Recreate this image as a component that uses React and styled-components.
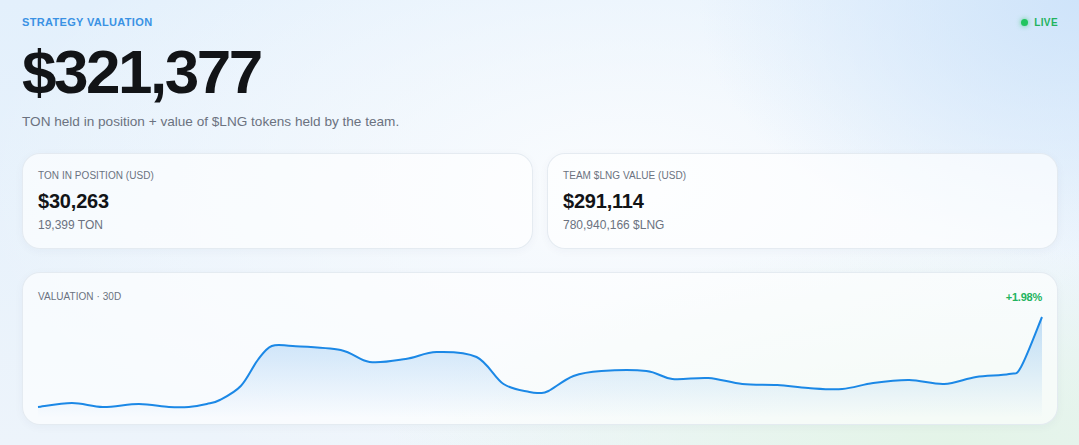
import React from "react";
import styled, { createGlobalStyle } from "styled-components";

const GlobalStyle = createGlobalStyle`
  html, body {
    margin: 0;
    padding: 0;
  }
  body {
    font-family: "Liberation Sans", Arial, sans-serif;
    color: #111418;
    background: #eef5fb;
  }
`;

// 30 day valuation, already scaled into the chart box (x: 0..1005, y: 0..100)
const series = [
  [0, 95], [34, 91], [65, 95], [101, 92], [131, 95], [151, 95], [169, 92],
  [182, 88], [203, 74], [220, 48], [234, 34], [255, 34], [303, 38], [332, 50],
  [368, 47], [399, 40], [439, 45], [466, 72], [492, 80], [502, 81], [511, 79],
  [536, 64], [564, 59], [609, 59], [635, 67], [671, 66], [705, 72], [740, 73],
  [771, 76], [805, 77], [836, 71], [872, 68], [907, 72], [939, 65], [972, 62],
  [984, 55], [1005, 5],
];

const CHART_W = 1005;
const CHART_H = 100;

const smoothPath = (pts) => {
  let d = `M${pts[0][0]},${pts[0][1]}`;
  for (let i = 0; i < pts.length - 1; i++) {
    const p0 = pts[i - 1] || pts[i];
    const p1 = pts[i];
    const p2 = pts[i + 1];
    const p3 = pts[i + 2] || p2;
    const c1x = p1[0] + (p2[0] - p0[0]) / 6;
    const c1y = p1[1] + (p2[1] - p0[1]) / 6;
    const c2x = p2[0] - (p3[0] - p1[0]) / 6;
    const c2y = p2[1] - (p3[1] - p1[1]) / 6;
    d += ` C${c1x},${c1y} ${c2x},${c2y} ${p2[0]},${p2[1]}`;
  }
  return d;
};

const Page = styled.div`
  box-sizing: border-box;
  height: 445px;
  padding: 15px 21px 0 22px;
  overflow: hidden;
  background:
    radial-gradient(ellipse 380px 260px at 100% 0%, #cfe4fa 0%, rgba(207, 228, 250, 0) 100%),
    radial-gradient(ellipse 560px 200px at 88% 100%, #e3f4e7 0%, rgba(227, 244, 231, 0) 100%),
    radial-gradient(ellipse 650px 330px at 58% 42%, #fafcfe 0%, rgba(250, 252, 254, 0) 100%),
    linear-gradient(180deg, #e3f0fc 0%, #edf4fb 100%);
`;

const Header = styled.div`
  display: flex;
  justify-content: space-between;
  align-items: center;
  height: 14px;
`;

const Eyebrow = styled.div`
  font-size: 11px;
  font-weight: 700;
  letter-spacing: 0.03em;
  color: #3a92e4;
  text-transform: uppercase;
`;

const Live = styled.div`
  display: flex;
  align-items: center;
  gap: 6px;
  font-size: 10px;
  font-weight: 700;
  letter-spacing: 0.04em;
  color: #22b35e;
`;

const Dot = styled.span`
  width: 7px;
  height: 7px;
  border-radius: 50%;
  background: #22c55e;
  box-shadow: 0 0 5px rgba(34, 197, 94, 0.7);
`;

const Total = styled.div`
  margin-top: 11px;
  font-size: 62px;
  line-height: 64px;
  font-weight: 700;
  letter-spacing: -0.04em;
  color: #121417;
`;

const Caption = styled.div`
  margin-top: 8px;
  font-size: 13.6px;
  line-height: 20px;
  color: #6b7280;
`;

const Cards = styled.div`
  display: grid;
  grid-template-columns: 1fr 1fr;
  gap: 14px;
  margin-top: 21px;
`;

const Card = styled.div`
  box-sizing: border-box;
  border-radius: 18px;
  background: rgba(255, 255, 255, 0.62);
  border: 1px solid rgba(222, 230, 238, 0.8);
  box-shadow: 0 2px 10px rgba(30, 60, 100, 0.04);
  padding: ${(p) => p.$pad || "15px 15px"};
`;

const Label = styled.div`
  font-size: 10px;
  line-height: 14px;
  letter-spacing: 0.005em;
  color: #6b7280;
  text-transform: uppercase;
`;

const Value = styled.div`
  margin-top: 6px;
  font-size: 20px;
  line-height: 24px;
  font-weight: 700;
  letter-spacing: -0.01em;
  color: #121417;
`;

const Sub = styled.div`
  margin-top: 4px;
  font-size: 12px;
  line-height: 16px;
  color: #6b7280;
`;

const ChartCard = styled(Card)`
  margin-top: 23px;
  height: 153px;
`;

const ChartHead = styled.div`
  display: flex;
  justify-content: space-between;
  align-items: center;
  margin-top: 2px;
`;

const Change = styled.div`
  font-size: 11px;
  font-weight: 700;
  color: #22b35e;
  letter-spacing: -0.02em;
`;

const ChartSvg = styled.svg`
  display: block;
  width: 100%;
  height: ${CHART_H}px;
  margin-top: 8px;
  overflow: visible;
`;

const StatCard = ({ label, value, sub }) => (
  <Card>
    <Label>{label}</Label>
    <Value>{value}</Value>
    <Sub>{sub}</Sub>
  </Card>
);

const Sparkline = ({ points }) => {
  const line = smoothPath(points);
  const last = points[points.length - 1];
  const area = `${line} L${last[0]},${CHART_H + 6} L${points[0][0]},${CHART_H + 6} Z`;
  return (
    <ChartSvg viewBox={`0 0 ${CHART_W} ${CHART_H}`} preserveAspectRatio="none">
      <defs>
        <linearGradient id="valFill" x1="0" y1="0" x2="0" y2="1">
          <stop offset="0%" stopColor="#2f8fe6" stopOpacity="0.28" />
          <stop offset="100%" stopColor="#2f8fe6" stopOpacity="0" />
        </linearGradient>
      </defs>
      <path d={area} fill="url(#valFill)" />
      <path d={line} fill="none" stroke="#1b88e6" strokeWidth="2" strokeLinejoin="round" />
    </ChartSvg>
  );
};

export default function App() {
  return (
    <>
      <GlobalStyle />
      <Page>
        <Header>
          <Eyebrow>Strategy Valuation</Eyebrow>
          <Live>
            <Dot />
            LIVE
          </Live>
        </Header>
        <Total>$321,377</Total>
        <Caption>TON held in position + value of $LNG tokens held by the team.</Caption>

        <Cards>
          <StatCard label="TON in position (USD)" value="$30,263" sub="19,399 TON" />
          <StatCard label="Team $LNG value (USD)" value="$291,114" sub="780,940,166 $LNG" />
        </Cards>

        <ChartCard $pad="15px 15px 12px">
          <ChartHead>
            <Label>Valuation · 30D</Label>
            <Change>+1.98%</Change>
          </ChartHead>
          <Sparkline points={series} />
        </ChartCard>
      </Page>
    </>
  );
}
